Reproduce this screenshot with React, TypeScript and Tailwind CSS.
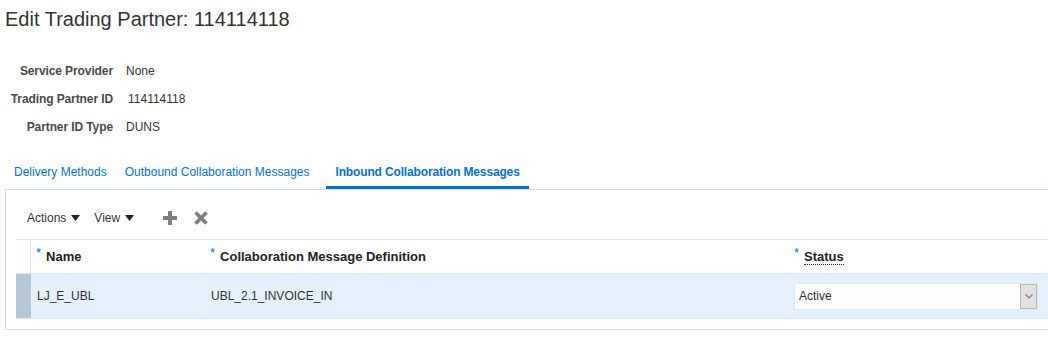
import React from "react";

const font = { fontFamily: '"Liberation Sans", Arial, sans-serif' };

const details = [
  { label: "Service Provider", value: "None" },
  { label: "Trading Partner ID", value: "114114118" },
  { label: "Partner ID Type", value: "DUNS" },
];

function Req() {
  return <span className="relative -top-[4px] mr-[5px] text-[13px] font-normal text-[#0572ce]">*</span>;
}

function Caret() {
  return (
    <svg width="9" height="6" viewBox="0 0 9 6" className="ml-[5px] inline-block">
      <path d="M0 0 H9 L4.5 6 Z" fill="#222" />
    </svg>
  );
}

export default function App() {
  return (
    <div className="h-[337px] w-[1048px] overflow-hidden bg-white text-[#333]" style={font}>
      <h1 className="pl-[5px] pt-[7px] text-[20px] leading-[24px] text-[#333]">
        Edit Trading Partner: 114114118
      </h1>

      {/* header fields */}
      <div className="mt-[32px] flex flex-col gap-[13px]">
        {details.map((d) => (
          <div key={d.label} className="flex h-[15px] items-center text-[12px]">
            <div className="w-[113px] text-right font-bold tracking-[-0.1px] text-[#4a4a4a]">{d.label}</div>
            <div className={d.label === "Trading Partner ID" ? "pl-[15px]" : "pl-[13px]"}>{d.value}</div>
          </div>
        ))}
      </div>

      {/* tabs */}
      <div className="mt-[25px] flex h-[30px] items-stretch text-[12px] text-[#0572ce]">
        <div className="ml-[14px] flex items-center border-b-[3px] border-transparent pb-[1px]">
          Delivery Methods
        </div>
        <div className="ml-[18px] flex items-center border-b-[3px] border-transparent pb-[1px]">
          Outbound Collaboration Messages
        </div>
        <div className="ml-[17px] flex items-center border-b-[3px] border-[#0572ce] px-[9px] pb-[1px] font-bold tracking-[-0.15px]">
          Inbound Collaboration Messages
        </div>
      </div>

      {/* panel */}
      <div className="ml-[5px] h-[141px] border-l border-t border-b border-[#d6dfe6] pl-[10px]">
        <div className="flex h-[49px] items-center pl-[11px] pt-[7px] text-[12px]">
          <span className="flex items-center">
            Actions
            <Caret />
          </span>
          <span className="ml-[14px] flex items-center">
            View
            <Caret />
          </span>
          <span className="ml-[29px] flex items-center gap-[17px]">
            <svg width="14" height="14" viewBox="0 0 14 14">
              <path d="M5 0 H9 V5 H14 V9 H9 V14 H5 V9 H0 V5 H5 Z" fill="#7d7d7d" />
            </svg>
            <svg width="14" height="14" viewBox="0 0 14 14">
              <path d="M1.5 1.5 L12.5 12.5 M12.5 1.5 L1.5 12.5" stroke="#7d7d7d" strokeWidth="3.6" />
            </svg>
          </span>
        </div>

        {/* table */}
        <div className="border-t border-[#dfe4e8]">
          <div className="flex h-[33px] items-center text-[13px] font-bold text-[#222]">
            <div className="h-full w-[15px] border-r border-[#dfe4e8]" />
            <div className="w-[174px] pl-[5px]">
              <Req />
              Name
            </div>
            <div className="w-[580px] pl-[5px]">
              <Req />
              Collaboration Message Definition
            </div>
            <div className="flex-1 pl-[9px]">
              <Req />
              <span className="border-b border-dotted border-[#222]">Status</span>
            </div>
          </div>
          <div className="flex h-[46px] items-stretch border-t border-b border-[#dfe4e8] bg-[#e4f0fd] text-[12px] text-[#333]">
            <div className="w-[15px] bg-[#b6c8d7]" />
            <div className="flex w-[174px] items-center pl-[6px]">LJ_E_UBL</div>
            <div className="flex w-[580px] items-center border-l border-[#eef5fd] pl-[5px]">
              UBL_2.1_INVOICE_IN
            </div>
            <div className="flex flex-1 items-center border-l border-[#eef5fd] pl-[8px]">
              <div className="flex h-[27px] w-[244px] items-stretch border border-[#e3e8ec] bg-[#fcfdfe]">
                <div className="flex flex-1 items-center pl-[4px]">Active</div>
                <div className="flex w-[17px] items-center justify-center border border-[#b9b9b9] bg-[#e1e1e1]">
                  <svg width="8" height="5" viewBox="0 0 8 5">
                    <path d="M0.5 0.5 L4 4 L7.5 0.5" fill="none" stroke="#777" strokeWidth="1.2" />
                  </svg>
                </div>
              </div>
            </div>
          </div>
        </div>
      </div>
    </div>
  );
}
